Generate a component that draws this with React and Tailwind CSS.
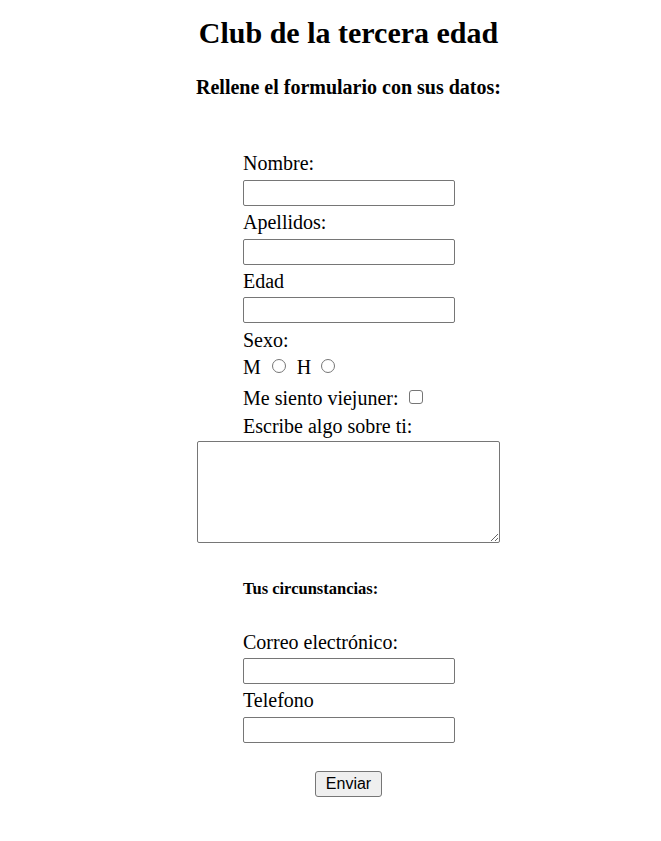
import React from "react";

export default function App() {
  const label = "block h-[23px] leading-[23px] text-[20px]";
  const input =
    "block w-[212px] h-[26px] border border-[#767676] rounded-[2px] bg-white px-[2px] text-[13px] font-['Liberation_Sans',sans-serif]";
  const radio =
    "appearance-none inline-block w-[14px] h-[14px] rounded-full border border-[#767676] bg-white mb-[1px] align-baseline";
  return (
    <div className="min-h-[841px] bg-white text-black font-['Liberation_Serif',serif] pl-[36px]">
      <div className="flex flex-col items-center">
        <h1 className="mt-[14px] text-[30px] font-bold leading-[37px]">
          Club de la tercera edad
        </h1>
        <h3 className="mt-[25px] text-[20px] font-bold leading-[23px]">
          Rellene el formulario con sus datos:
        </h3>

        <form className="flex flex-col items-center" onSubmit={(e) => e.preventDefault()}>
          <div className="w-[213px] pl-[1px] flex flex-col">
            <label className={`${label} mt-[53px]`}>Nombre:</label>
            <input type="text" className={`${input} mt-[5px]`} />
            <label className={`${label} mt-[5px]`}>Apellidos:</label>
            <input type="text" className={`${input} mt-[5px]`} />
            <label className={`${label} mt-[5px]`}>Edad</label>
            <input type="text" className={`${input} mt-[4px]`} />
            <span className={`${label} mt-[6px]`}>Sexo:</span>
            <div className={`${label} mt-[4px] whitespace-nowrap`}>
              M
              <input type="radio" name="sexo" className={`${radio} ml-[11px] mr-[11px]`} />
              H
              <input type="radio" name="sexo" className={`${radio} ml-[10px]`} />
            </div>
            <div className={`${label} mt-[8px] whitespace-nowrap`}>
              Me siento viejuner:
              <input
                type="checkbox"
                className="appearance-none inline-block w-[14px] h-[14px] rounded-[3px] border border-[#767676] bg-white ml-[10px] mb-[1px] align-baseline"
              />
            </div>
            <label className={`${label} mt-[5px]`}>Escribe algo sobre ti:</label>
          </div>
          <textarea className="block mt-[3px] w-[303px] h-[102px] border border-[#767676] rounded-[2px] bg-white" />

          <div className="w-[213px] pl-[1px] flex flex-col">
            <h4 className="mt-[37px] text-[16.5px] font-bold leading-[18px]">
              Tus circunstancias:
            </h4>
            <label className={`${label} mt-[33px]`}>Correo electrónico:</label>
            <input type="email" className={`${input} mt-[4px]`} />
            <label className={`${label} mt-[5px]`}>Telefono</label>
            <input type="tel" className={`${input} mt-[5px]`} />
          </div>

          <button
            type="submit"
            className="mt-[28px] w-[67px] h-[26px] border border-[#767676] rounded-[3px] bg-[#efefef] text-[16px] leading-[20px] font-['Liberation_Sans',sans-serif] text-black"
          >
            Enviar
          </button>
        </form>
      </div>
    </div>
  );
}
